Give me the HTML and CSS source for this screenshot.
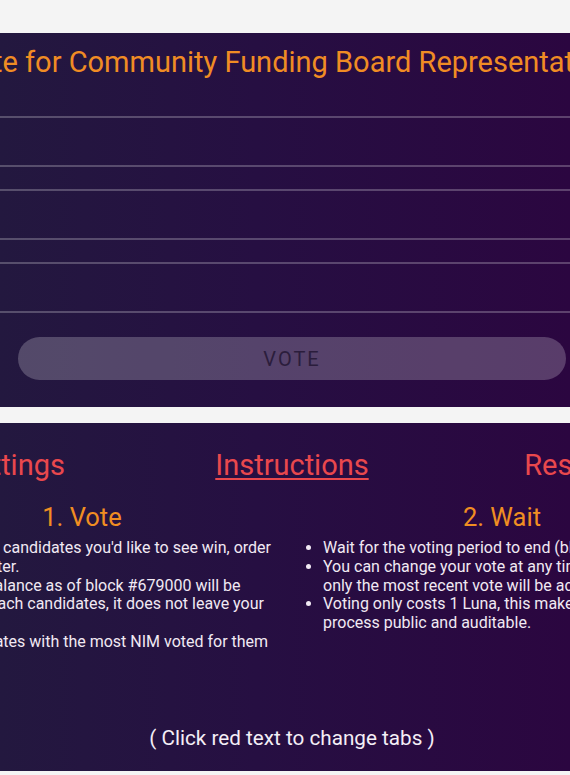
FILE: index.html
```html
<!DOCTYPE html>
<html lang="en">
<head>
<meta charset="utf-8">
<title>Community Funding Board Vote</title>
<link rel="stylesheet" href="styles.css">
</head>
<body>
<main class="page">
  <section class="panel panel-vote">
    <div class="frame">
      <h1 class="title">Vote for Community Funding Board Representatives</h1>
      <div class="candidates">
        <div class="candidate"></div>
        <div class="candidate"></div>
        <div class="candidate"></div>
      </div>
      <button class="vote-btn" type="button">VOTE</button>
    </div>
  </section>

  <section class="panel panel-info">
    <div class="frame info-frame">
      <nav class="tabs">
        <a class="tab">Settings</a>
        <a class="tab tab-active">Instructions</a>
        <a class="tab">Results</a>
      </nav>
      <div class="steps">
        <div class="step">
          <h2 class="step-title">1. Vote</h2>
          <ul class="step-list">
            <li>Pick all of the candidates you'd like to see win, order does not matter.</li>
            <li>Your wallet balance as of block #679000 will be counted for each candidates, it does not leave your wallet.</li>
            <li>The 5 candidates with the most NIM voted for them win.</li>
          </ul>
        </div>
        <div class="step">
          <h2 class="step-title">2. Wait</h2>
          <ul class="step-list">
            <li>Wait for the voting period to end (block #689000).</li>
            <li>You can change your vote at any time until the end, only the most recent vote will be accounted for.</li>
            <li>Voting only costs 1 Luna, this makes the voting process public and auditable.</li>
          </ul>
        </div>
      </div>
      <p class="hint">( Click red text to change tabs )</p>
    </div>
  </section>
</main>
</body>
</html>
```

FILE: styles.css
```css
html, body {
  margin: 0;
  padding: 0;
  background: #f4f4f4;
  overflow: hidden;
  font-family: Roboto, "Noto Sans", sans-serif;
}

.page {
  padding: 33px 0 4px;
  display: flex;
  flex-direction: column;
  gap: 16px;
}

.panel {
  width: 100%;
  overflow: hidden;
  background: linear-gradient(to right, #23183f 0%, #260f42 45%, #2b0640 100%);
}

.frame {
  width: 840px;
  margin-left: calc(50% - 413px);
}

/* ---------- vote panel ---------- */
.panel-vote {
  height: 374px;
}

.panel-vote .frame {
  display: flex;
  flex-direction: column;
  align-items: center;
}

.title {
  margin: 11px 0 0;
  font-size: 29px;
  line-height: 36px;
  font-weight: 400;
  color: #f08c24;
  white-space: nowrap;
  text-align: center;
}

.candidates {
  align-self: stretch;
  margin: 36px -400px 0;
  display: flex;
  flex-direction: column;
  gap: 22px;
}

.candidate {
  height: 47px;
  border-top: 2px solid rgba(255, 255, 255, 0.24);
  border-bottom: 2px solid rgba(255, 255, 255, 0.24);
}

.vote-btn {
  margin-top: 24px;
  width: 548px;
  height: 43px;
  border: none;
  border-radius: 22px;
  background: rgba(255, 255, 255, 0.22);
  color: #2b1d3c;
  font-family: Roboto, "Noto Sans", sans-serif;
  font-size: 20px;
  letter-spacing: 2px;
  padding: 0;
}

/* ---------- info panel ---------- */
.panel-info {
  height: 348px;
}

.info-frame {
  height: 100%;
  display: flex;
  flex-direction: column;
  box-sizing: border-box;
  padding: 26px 0 21px;
}

.tabs {
  display: grid;
  grid-template-columns: repeat(3, 1fr);
  text-align: center;
}

.tab {
  font-size: 29px;
  line-height: 32px;
  color: #e9484d;
  cursor: pointer;
}

.tab-active {
  text-decoration: underline;
  text-decoration-thickness: 2px;
  text-underline-offset: 3px;
}

.steps {
  margin-top: 21px;
  display: grid;
  grid-template-columns: 420px 420px;
}

.step-title {
  margin: 0;
  font-size: 25.5px;
  line-height: 30px;
  font-weight: 400;
  color: #f08e22;
  text-align: center;
}

.step-list {
  margin: 7px 0 0;
  padding: 0 0 0 31px;
  width: 378px;
  font-size: 16px;
  line-height: 18.8px;
  color: #f1e9f3;
}

.hint {
  margin: auto 0 0;
  font-size: 20.7px;
  line-height: 24px;
  color: #f4eef6;
  text-align: center;
}
```
